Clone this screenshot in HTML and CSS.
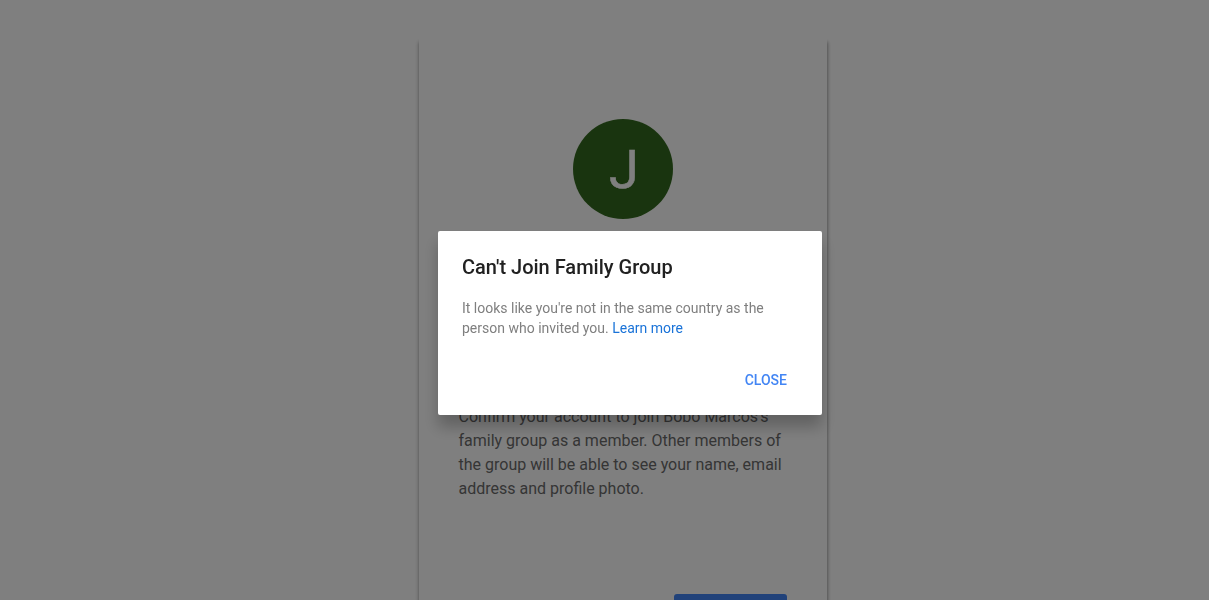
FILE: index.html
```html
<!doctype html>
<html lang="en">
<head>
	<meta charset="utf-8">
	<title>Join Family Group</title>
	<link rel="stylesheet" href="styles.css">
</head>
<body>
<main class="card">
	<div class="avatar">J</div>
	<p class="info">Confirm your account to join Bobo Marcos's family group as a member. Other members of the group will be able to see your name, email address and profile photo.</p>
	<div class="actions">
		<button class="confirm" type="button"></button>
	</div>
</main>
<div class="overlay">
	<div class="dialog" role="dialog">
		<h1>Can't Join Family Group</h1>
		<p>It looks like you're not in the same country as the person who invited you. <a href="#">Learn more</a></p>
		<div class="buttons">
			<button class="close" type="button">CLOSE</button>
		</div>
	</div>
</div>
</body>
</html>
```

FILE: styles.css
```css
*{margin: 0;padding: 0;box-sizing: border-box;}
body,html{height: 100%;}
body{
	overflow: hidden;
	background: #fff;
	font-family: Roboto, "Liberation Sans", sans-serif;
}
.card{
	width: 408px;height: 640px;
	margin: 38px 0 0 419px;
	padding: 81px 40px 0;
	box-shadow: 0 4px 4px rgba(0,0,0,0.35), 1px 4px 3px rgba(0,0,0,0.15);
}
.avatar{
	width: 100px;height: 100px;
	margin: 0 auto;
	padding-left: 2px;
	border-radius: 50%;
	background: #33691e;
	color: #fff;
	font-size: 54px;line-height: 101px;
	text-align: center;
	-webkit-text-stroke: 0.5px #fff;
}
.info{
	margin: 186px 0 0 -0.5px;
	color: #6b6b6b;
	font-size: 16px;line-height: 24px;
}
.actions{
	display: flex;
	justify-content: flex-end;
	margin-top: 93px;
}
.confirm{
	width: 113px;height: 36px;
	border: 0;border-radius: 3px;
	background: #4285f4;
}
.overlay{
	position: fixed;
	top: 0;right: 0;bottom: 0;left: 0;
	padding: 231px 0 0 438px;
	background: rgba(0,0,0,0.5);
}
.dialog{
	width: 384px;height: 184px;
	padding: 24px;
	border-radius: 2px;
	background: #fff;
	box-shadow: 0 12px 15px rgba(0,0,0,0.24);
}
.dialog h1{
	color: #212121;
	font-size: 20px;font-weight: 500;line-height: 24px;
}
.dialog p{
	margin-top: 19px;
	color: #7f7f7f;
	font-size: 14px;line-height: 20px;
}
.dialog a{
	color: #1a73d8;
	text-decoration: none;
}
.buttons{
	display: flex;
	justify-content: flex-end;
	margin-top: 24px;
}
.close{
	padding: 0 11px;
	border: 0;
	background: none;
	color: #4285f4;
	font: 500 14px/36px Roboto, "Liberation Sans", sans-serif;
}
```
